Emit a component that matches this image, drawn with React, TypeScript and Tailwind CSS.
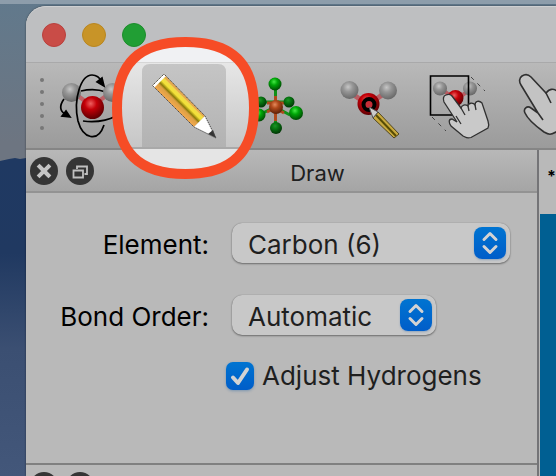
import { useId, useState } from "react";
import type { ReactNode } from "react";

function Ball({ x, y, r, fill }: { x: number; y: number; r: number; fill: string }) {
  return <circle cx={x} cy={y} r={r} fill={`url(#${fill})`} stroke="none" />;
}

function Shades() {
  const list = [
    ["grey", "#c6c6c6", "#979797", "#6a6a6a"],
    ["red", "#ee6060", "#c40008", "#620003"],
    ["green", "#46e846", "#00a808", "#004d04"],
    ["dark", "#1c9426", "#067510", "#023806"],
    ["rust", "#e58a5c", "#b04a1c", "#5e2208"],
  ];
  return (
    <svg className="absolute size-0" aria-hidden="true">
      <defs>
        {list.map(([id, a, b, c]) => (
          <radialGradient key={id} id={id} cx="0.42" cy="0.33" r="0.65">
            <stop offset="0" stopColor={a} />
            <stop offset="0.4" stopColor={b} />
            <stop offset="1" stopColor={c} />
          </radialGradient>
        ))}
      </defs>
    </svg>
  );
}

function RotateIcon() {
  return (
    <svg viewBox="0 0 84 84" className="size-full" fill="none" stroke="#000" strokeWidth="1.700">
      <path d="M31 27c8-2 17-2 25 1" />
      <path d="M28 32L42 42L56 32" stroke="#bd6268" strokeWidth="4" />
      <Ball x={21.5} y={28.5} r={9.5} fill="grey" />
      <Ball x={62.5} y={28.5} r={9.5} fill="grey" />
      <path d="M54 61C48 79 33 75 28 57C23 35 31 11 42 11c5 0 8 3 10 7" />
      <Ball x={42.5} y={43.5} r={11.5} fill="red" />
      <path d="M33 57c14 2 32-1 38-10 3-5 3-8 0-13M14 35c-5 7-4 12 1 15" />
      <path d="M54 22l-7-4 5-4zM20 53l-8-1 4-5z" fill="#000" />
    </svg>
  );
}

function PencilIcon() {
  return (
    <svg viewBox="0 0 84 84" className="relative size-full">
      <defs>
        <linearGradient id="wood" gradientUnits="userSpaceOnUse" x1="31" y1="41" x2="43" y2="29">
          <stop offset="0" stopColor="#f0a84e" />
          <stop offset="0.26" stopColor="#dda044" />
          <stop offset="0.38" stopColor="#8b7b0a" />
          <stop offset="0.55" stopColor="#f3e238" />
          <stop offset="0.74" stopColor="#f0da48" />
          <stop offset="0.78" stopColor="#e5a94e" />
          <stop offset="1" stopColor="#eab052" />
        </linearGradient>
      </defs>
      <path d="M10.500 21.500L22 10l41 42-11 11z" fill="url(#wood)" />
      <path d="M10.500 21.500L22 10l2 2-11.500 11.500z" fill="#fff" />
      <path d="M52 63l11-11 11 22z" fill="#fff" />
      <path d="M66 70l5-4 3 8z" fill="#333" />
      <path d="M10.500 21.500L22 10l41 42 11 22-22-11z" fill="none" stroke="#4a4a4a" strokeDasharray="1.500 .7" />
    </svg>
  );
}

function CrystalIcon() {
  return (
    <svg viewBox="0 0 84 84" className="size-full">
      <path d="M41.500 22v40M27 38l29 0M25 51l16-8 15 8" stroke="#109018" strokeWidth="3" fill="none" />
      <path d="M41.500 32v25M33 39l17 0M33 48l8-4 9 5" stroke="#b04a1c" strokeWidth="3" fill="none" />
      <Ball x={27} y={38} r={5.5} fill="dark" />
      <Ball x={55} y={38} r={5.5} fill="dark" />
      <Ball x={41} y={20} r={6.5} fill="green" />
      <Ball x={42} y={64} r={6} fill="dark" />
      <Ball x={42} y={43} r={7} fill="rust" />
      <Ball x={25} y={51} r={6.5} fill="green" />
      <Ball x={62} y={49} r={7} fill="green" />
    </svg>
  );
}

function ProbeIcon() {
  return (
    <svg viewBox="0 0 84 84" className="size-full">
      <path d="M28 31l14 10 14-10" stroke="#b95c62" strokeWidth="5" fill="none" />
      <Ball x={23.5} y={26} r={9} fill="grey" />
      <Ball x={62} y={26.5} r={9} fill="grey" />
      <Ball x={42.5} y={40} r={11} fill="red" />
      <circle cx="43" cy="40.500" r="5.500" fill="#c52e38" stroke="#000" strokeWidth="4" />
      <path d="M52 48L73 70l-5 4L47 54z" fill="#c8a93e" stroke="#514620" />
      <path d="M50 51l20 21" stroke="#574c05" strokeWidth="2" />
      <path d="M43 43l9 5-5 6z" fill="#ccc" stroke="#555" />
    </svg>
  );
}

function SelectIcon() {
  return (
    <svg viewBox="0 0 84 84" className="size-full">
      <path d="M26 27l12 9 12-9" stroke="#b95c62" strokeWidth="4" fill="none" />
      <Ball x={22} y={24.5} r={7} fill="grey" />
      <Ball x={52} y={24.5} r={7} fill="grey" />
      <Ball x={37.5} y={34} r={8} fill="red" />
      <path d="M12.500 12h38v39h-38z" fill="none" stroke="#000" strokeWidth="1.600" />
      <path d="M53 13l14 14M14 53l14 14" stroke="#444" strokeDasharray="4 5" />
      <path
        d="M28 31c-3 1-3 4-2 7l13 20-5-3c-4 0-3 4-1 7l12 10c3 1 3 3 8 1.500L70 64c1-2 1-4 0-7l-6-18c-3-3-7-2-7 2-2-3-7-2-7 1-3-2-6-1-7 2L34 32c-2-2-4-2-6-1z"
        fill="#c9c9c9"
        stroke="#303030"
        strokeWidth="1.300"
      />
      <path d="M43 44l4 7M50 42l1 5M57 41l1 5M38 52l5 8" stroke="#303030" strokeWidth="1.300" />
    </svg>
  );
}

function HandIcon() {
  return (
    <svg viewBox="0 0 84 84" className="size-full">
      <path
        d="M12 12c-3 2-3 6-1 9l17 28-7-5c-4-3-8 1-6 5 3 7 12 14 19 19 5 3 7 3 12 0l23-12V32c-3-8-9-9-12-5-2-4-9-4-10 0-4-3-8-2-11 2L21 13c-3-3-6-3-9-1z"
        fill="#c3c3c3"
        stroke="#303030"
        strokeWidth="1.600"
      />
      <path d="M36 29l5 10M47 27l3 9M28 49l5 7" stroke="#303030" strokeWidth="1.600" />
    </svg>
  );
}

function Spotlight() {
  const ring = "M75.500 5C124 5 144 29 144 71s-20 66-68.500 66S7 113 7 71 27 5 75.500 5z";
  return (
    <svg
      viewBox="0 0 151 142"
      className="pointer-events-none absolute -left-8 -top-[27px] h-[142px] w-[151px] max-w-none"
      aria-hidden="true"
    >
      <defs>
        <clipPath id="hole">
          <path d={ring} />
        </clipPath>
        <linearGradient id="bright" x1="0" y1="0" x2="0" y2="1">
          <stop offset="0" stopColor="#e7e7e7" />
          <stop offset="1" stopColor="#c6c6c6" />
        </linearGradient>
        <linearGradient id="tile" x1="0" y1="0" x2="0" y2="1">
          <stop offset="0" stopColor="#c5c5c5" />
          <stop offset="1" stopColor="#b2b2b2" />
        </linearGradient>
      </defs>
      <g clipPath="url(#hole)">
        <path d="M0 0h151v25H0z" fill="#f0f1f3" />
        <path d="M0 25h151v86H0z" fill="url(#bright)" />
        <path d="M0 25h151v1H0z" fill="#d6d6d6" />
        <path d="M32 111V35q0-8 8-8h68q8 0 8 8v76z" fill="url(#tile)" />
        <path d="M0 110h151v2H0z" fill="#a9a9a9" />
        <path d="M0 112h151v30H0z" fill="#e5e5e5" />
      </g>
      <path d={ring} fill="none" stroke="#f64c26" strokeWidth="10" />
    </svg>
  );
}

function Tool({ label, children }: { label: string; children: ReactNode }) {
  return (
    <button type="button" aria-label={label} className="relative size-[84px] shrink-0">
      {children}
    </button>
  );
}

function DockButtons() {
  return (
    <div className="flex gap-2">
      <button type="button" aria-label="Close panel" className="size-7 rounded-full bg-[#353535]">
        <svg viewBox="0 0 28 28" className="size-full">
          <path d="M9.500 9.500l9 9M18.500 9.500l-9 9" stroke="#c4c4c4" strokeWidth="4" strokeLinecap="square" />
        </svg>
      </button>
      <button type="button" aria-label="Float panel" className="size-7 rounded-full bg-[#353535]">
        <svg viewBox="0 0 28 28" className="size-full" fill="none" stroke="#c0c0c0" strokeWidth="1.800">
          <path d="M11 12V9.500h10V17h-2.500M7.500 13.500h9.500v7H7.500z" />
        </svg>
      </button>
    </div>
  );
}

function Picker({ label, options, width }: { label: string; options: string[]; width: string }) {
  const id = useId();
  return (
    <>
      <label htmlFor={id} className="pt-1 text-right leading-9 text-black">
        {label}
      </label>
      <div className={`relative h-10 ${width}`}>
        <select
          id={id}
          className="size-full appearance-none rounded-[10px] bg-[#c8c8c8] pl-4 pr-10 pt-0.5 text-[#1f1f1f] shadow-[0_1px_2px_#00000066,0_0_1px_#00000055]"
        >
          {options.map((o) => (
            <option key={o}>{o}</option>
          ))}
        </select>
        <span className="pointer-events-none absolute right-1 top-1 size-8 rounded-lg bg-linear-to-b from-[#0074d1] to-[#005dc9] shadow-[0_1px_2px_#0050a044]">
          <svg viewBox="0 0 32 32" className="size-full" fill="none" stroke="#d3d3d3" strokeWidth="3" strokeLinecap="round" strokeLinejoin="round">
            <path d="M10 12.500l6-6 6 6M10 19.500l6 6 6-6" />
          </svg>
        </span>
      </div>
    </>
  );
}

export default function App() {
  const [adjust, setAdjust] = useState(true);
  return (
    <div className="flex h-screen flex-col overflow-hidden bg-linear-to-b from-[#61798c] via-[#6d7581] via-30% to-[#6d7581] font-[Inter,'Liberation_Sans',sans-serif] text-[26px]">
      <Shades />
      <div className="h-1 shrink-0 bg-[#8d9dab]" />
      <div className="flex min-h-0 flex-1 pt-0.5">
        <div className="flex w-[26px] shrink-0 flex-col pt-[150px]">
          <svg viewBox="0 0 26 320" preserveAspectRatio="none" className="min-h-0 w-full flex-1">
            <defs>
              <linearGradient id="ridge" x1="0" y1="0" x2="0" y2="1">
                <stop offset="0" stopColor="#1f3962" />
                <stop offset="0.3" stopColor="#203961" />
                <stop offset="0.6" stopColor="#3b4f72" />
                <stop offset="1" stopColor="#43577a" />
              </linearGradient>
            </defs>
            <path d="M0 5l9-2 6-1 5 1 6-1v318H0z" fill="url(#ridge)" />
          </svg>
        </div>

        <main className="flex min-w-0 flex-1 flex-col rounded-tl-[20px] bg-[#b9b9b9] shadow-[0_0_2px_#00000088]">
          <header className="flex h-14 shrink-0 items-center gap-4 rounded-tl-[20px] border-t border-[#cfd0d2] bg-[#bebfc1] pl-4">
            <button type="button" aria-label="Close" className="size-6 rounded-full border border-[#b9403d] bg-[#c94c47]" />
            <button type="button" aria-label="Minimize" className="size-6 rounded-full border border-[#b98620] bg-[#c89428]" />
            <button type="button" aria-label="Zoom" className="size-6 rounded-full border border-[#1c8d2b] bg-[#219e34]" />
          </header>

          <div className="relative z-10 flex h-[88px] shrink-0 border-b-2 border-t border-b-[#858585] border-t-[#a9a9aa] bg-linear-to-b from-[#b9b9b9] to-[#9b9b9b] pt-px">
            <div className="flex w-6 shrink-0 flex-col items-end gap-2 pr-1.5 pt-3.5" aria-hidden="true">
              {[0, 1, 2, 3, 4].map((n) => (
                <span key={n} className="size-1 rounded-full bg-[#777777]" />
              ))}
            </div>
            <div className="flex gap-2">
              <Tool label="Navigate"><RotateIcon /></Tool>
              <button type="button" aria-label="Draw" aria-pressed="true" className="relative z-10 size-[84px] shrink-0">
                <Spotlight />
                <PencilIcon />
              </button>
              <Tool label="Template"><CrystalIcon /></Tool>
              <Tool label="Label"><ProbeIcon /></Tool>
              <Tool label="Select"><SelectIcon /></Tool>
              <Tool label="Manipulate"><HandIcon /></Tool>
            </div>
          </div>

          <div className="flex min-h-0 flex-1">
            <section className="flex w-[513px] shrink-0 flex-col border-r-2 border-[#747477]">
              <div className="flex h-[43px] shrink-0 items-center border-b-2 border-[#939393] bg-linear-to-b from-[#b8b8b8] to-[#a5a5a5] pl-1">
                <DockButtons />
                <h1 className="flex-1 pl-1 pt-1 text-center text-[22px] leading-8 text-[#202020]">Draw</h1>
              </div>
              <form className="flex h-[272px] shrink-0 flex-col border-b-2 border-[#808080] pr-[27px] pt-[30px]">
                <div className="grid grid-cols-[183px_1fr] items-center gap-x-[23px] gap-y-8">
                  <Picker label="Element:" width="w-full" options={["Carbon (6)", "Hydrogen (1)", "Nitrogen (7)", "Oxygen (8)"]} />
                  <Picker label="Bond Order:" width="w-[204px]" options={["Automatic", "Single", "Double", "Triple"]} />
                </div>
                <label className="ml-[200px] mt-[27px] flex items-center gap-2 leading-7 text-[#1f1f1f]">
                  <span className="relative size-7 shrink-0">
                    <input
                      type="checkbox"
                      checked={adjust}
                      onChange={(e) => setAdjust(e.target.checked)}
                      className="peer block size-7 appearance-none rounded-[7px] bg-[#c8c8c8] shadow-[0_1px_3px_#0050a055] checked:bg-linear-to-b checked:from-[#0074d1] checked:to-[#005dc9]"
                    />
                    <svg viewBox="0 0 28 28" className="pointer-events-none absolute inset-0 hidden peer-checked:block" fill="none" stroke="#d3d3d3" strokeWidth="4" strokeLinecap="round" strokeLinejoin="round">
                      <path d="M7 15.500l5 5.500 9-13.500" />
                    </svg>
                  </span>
                  Adjust Hydrogens
                </label>
              </form>
              <div className="min-h-0 flex-1 overflow-hidden pl-1 pt-[7px]">
                <DockButtons />
              </div>
            </section>
            <section className="flex min-w-0 flex-1 flex-col overflow-hidden pl-px">
              <div className="h-16 shrink-0 pl-[7px] pt-3.5 text-base font-bold text-black">*</div>
              <div className="flex-1 bg-[#005f92]" />
            </section>
          </div>
        </main>
      </div>
    </div>
  );
}
